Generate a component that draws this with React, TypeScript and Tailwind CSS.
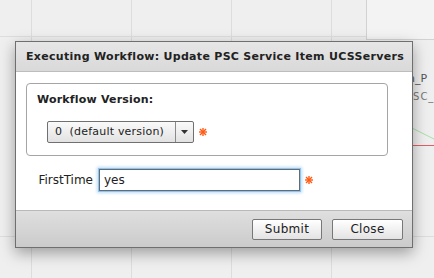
import React from 'react';

const font = "font-['DejaVu_Sans',Verdana,sans-serif]";

function Asterisk() {
  return (
    <svg className="ml-[5px]" width="8" height="8" viewBox="0 0 8 8">
      <g stroke="#ff5a14" strokeWidth="1.4" strokeLinecap="square">
        <line x1="4" y1="0.5" x2="4" y2="7.5" />
        <line x1="0.5" y1="4" x2="7.5" y2="4" />
        <line x1="1.5" y1="1.5" x2="6.5" y2="6.5" />
        <line x1="6.5" y1="1.5" x2="1.5" y2="6.5" />
      </g>
    </svg>
  );
}

export default function App(): JSX.Element {
  return (
    <div className={`relative h-[278px] w-[434px] overflow-hidden bg-[#efefef] ${font}`}>
      {/* canvas grid behind the dialog */}
      <div className="absolute left-[31px] top-0 h-full w-px bg-[#dddddd]" />
      <div className="absolute left-[131px] top-0 h-full w-px bg-[#dddddd]" />
      <div className="absolute left-[231px] top-0 h-full w-px bg-[#dddddd]" />
      <div className="absolute left-[331px] top-0 h-full w-px bg-[#dddddd]" />
      <div className="absolute left-0 top-[36px] h-px w-full bg-[#dddddd]" />
      <div className="absolute left-0 top-[236px] h-px w-full bg-[#dddddd]" />
      <div className="absolute left-[366px] top-0 h-[40px] w-[70px] border-b border-l border-[#d2d2d2] bg-[#f3f3f3]" />
      <div className="absolute left-[408px] top-[71px] text-[11px] text-[#555]">n_P</div>
      <div className="absolute left-[406px] top-[89px] text-[10px] tracking-[1px] text-[#777]">PSC_</div>
      <div className="absolute left-[410px] top-[145px] h-px w-[30px] bg-[#e06060]" />
      <svg className="absolute left-[410px] top-[125px]" width="24" height="20">
        <line x1="0" y1="2" x2="24" y2="14" stroke="#a8e0a8" strokeWidth="1" />
      </svg>

      {/* dialog */}
      <div className="absolute left-[15px] top-[41px] flex h-[207px] w-[398px] flex-col border border-[#6f6f6f] bg-white shadow-[0_5px_14px_rgba(0,0,0,0.35)]">
        <div className="flex h-[30px] items-center border-b border-[#bdbdbd] bg-gradient-to-b from-[#e6e6e6] to-[#d9d9d9] pl-[10px] pt-[1px] text-[11px] font-bold tracking-[0.3px] text-[#222]">
          Executing Workflow: Update PSC Service Item UCSServers
        </div>
        <div className="flex flex-1 flex-col px-[10px] pt-[11px]">
          <div className="flex h-[73px] w-[362px] flex-col rounded-[4px] border border-[#a5a5a5] pl-[10px] pt-[9px]">
            <div className="text-[11px] font-bold leading-[14px] tracking-[0.2px] text-[#222]">Workflow Version:</div>
            <div className="ml-[10px] mt-[14px] flex items-center">
              <div className="flex h-[22px] w-[147px] items-stretch rounded-[2px] border border-[#707070] bg-gradient-to-b from-[#fafafa] to-[#e2e2e2] text-[11px] tracking-[0.2px] text-[#222]">
                <div className="flex flex-1 items-center pl-[7px]">0&nbsp;&nbsp;(default version)</div>
                <div className="flex w-[18px] items-center justify-center border-l border-[#8a8a8a]">
                  <svg width="7" height="4"><path d="M0 0h7L3.5 4z" fill="#333" /></svg>
                </div>
              </div>
              <Asterisk />
            </div>
          </div>
          <div className="mt-[13px] flex items-center">
            <div className="w-[73px] pr-[6px] text-right text-[12px] text-[#222]">FirstTime</div>
            <div className="flex h-[22px] w-[201px] items-center border border-[#6a6a6a] pl-[4px] text-[12px] text-[#222] shadow-[0_0_0_1px_#8cc4f4,0_0_3px_2px_#b9dcfa]">
              yes
            </div>
            <Asterisk />
          </div>
        </div>
        <div className="flex h-[37px] items-center justify-end gap-[10px] border-t border-[#b9b9b9] bg-gradient-to-b from-[#dfdfdf] to-[#cbcbcb] pr-[9px]">
          <button className="h-[21px] w-[70px] rounded-[2px] border border-[#777] bg-gradient-to-b from-white to-[#e3e3e3] text-[12px] tracking-[0.3px] text-[#222]">
            Submit
          </button>
          <button className="h-[21px] w-[71px] rounded-[2px] border border-[#777] bg-gradient-to-b from-white to-[#e3e3e3] text-[12px] tracking-[0.3px] text-[#222]">
            Close
          </button>
        </div>
      </div>
    </div>
  );
}
